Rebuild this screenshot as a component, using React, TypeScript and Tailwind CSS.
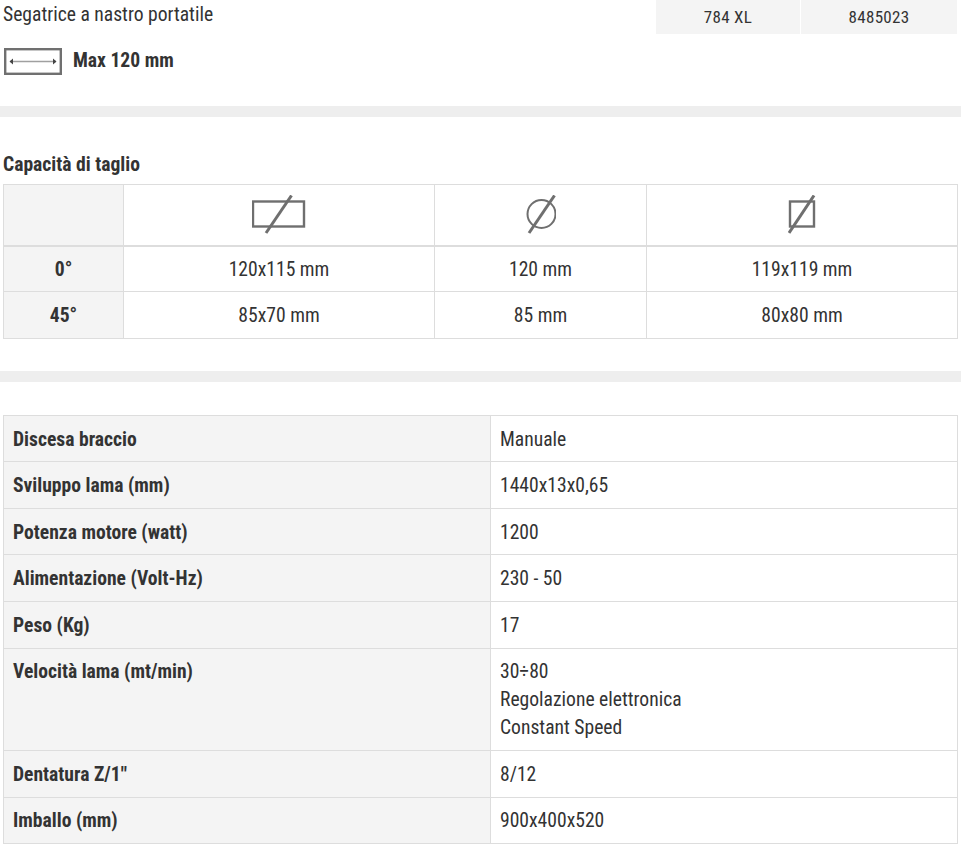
const specs: { label: string; value: string[]; h: string; pt: string }[] = [
  { label: "Discesa braccio", value: ["Manuale"], h: "h-[46px]", pt: "pt-[10px]" },
  { label: "Sviluppo lama (mm)", value: ["1440x13x0,65"], h: "h-[47px]", pt: "pt-[10px]" },
  { label: "Potenza motore (watt)", value: ["1200"], h: "h-[46px]", pt: "pt-[10px]" },
  { label: "Alimentazione (Volt-Hz)", value: ["230 - 50"], h: "h-[47px]", pt: "pt-[10px]" },
  { label: "Peso (Kg)", value: ["17"], h: "h-[47px]", pt: "pt-[10px]" },
  {
    label: "Velocità lama (mt/min)",
    value: ["30÷80", "Regolazione elettronica", "Constant Speed"],
    h: "h-[102px]",
    pt: "pt-[9px]",
  },
  { label: "Dentatura Z/1\"", value: ["8/12"], h: "h-[47px]", pt: "pt-[10px]" },
  { label: "Imballo (mm)", value: ["900x400x520"], h: "h-[46px]", pt: "pt-[9px]" },
];

const RectIcon = () => (
  <svg width="54" height="40" viewBox="0 0 54 40" fill="none" stroke="#6f6f6f">
    <rect x="1" y="6.5" width="51" height="25" strokeWidth="2.4" />
    <line x1="14" y1="38" x2="39.5" y2="0.5" strokeWidth="3" />
  </svg>
);

const RoundIcon = () => (
  <svg width="30" height="40" viewBox="0 0 30 40" fill="none" stroke="#6f6f6f">
    <circle cx="15.5" cy="19" r="14" strokeWidth="2" />
    <line x1="3" y1="38" x2="28.5" y2="0.5" strokeWidth="3" />
  </svg>
);

const SquareIcon = () => (
  <svg width="28" height="40" viewBox="0 0 28 40" fill="none" stroke="#6f6f6f">
    <rect x="2" y="6.5" width="24" height="25" strokeWidth="2.4" />
    <line x1="1" y1="38" x2="26" y2="0.5" strokeWidth="3" />
  </svg>
);

const WidthIcon = () => (
  <svg width="58" height="27" viewBox="0 0 58 27" fill="none">
    <rect x="1.2" y="1.2" width="55.6" height="24.6" stroke="#707070" strokeWidth="2.4" />
    <line x1="6" y1="13.5" x2="52" y2="13.5" stroke="#a0a0a0" strokeWidth="1.5" />
    <path d="M9 10.5 5.5 13.5l3.5 3zM49 10.5l3.5 3-3.5 3z" fill="#444" />
  </svg>
);

const Divider = () => <div className="h-[11px] bg-[#eeeeee]" />;

export default function App() {
  return (
    <div
      className="h-[849px] overflow-hidden bg-white text-[19.6px] leading-[28px] text-[#333333] [font-stretch:75%]"
      style={{ fontFamily: '"Roboto Condensed", Roboto, sans-serif' }}
    >
      {/* Header */}
      <div className="flex h-[106px] pl-[3px] pr-[4px]">
        <div className="flex-1 pt-px">
          <div>Segatrice a nastro portatile</div>
          <div className="mt-[18px] flex items-center gap-[11px] pl-px">
            <WidthIcon />
            <span className="font-bold">Max 120 mm</span>
          </div>
        </div>
        <div className="flex h-[34px] gap-px text-[17px] tracking-[0.3px]">
          <div className="flex w-[144px] items-center justify-center bg-[#f4f4f4]">784 XL</div>
          <div className="flex w-[156px] items-center justify-center bg-[#f4f4f4]">8485023</div>
        </div>
      </div>
      <Divider />

      {/* Capacita */}
      <div className="mt-[34px] pl-[3px] font-bold">Capacità di taglio</div>
      <div className="mx-[3px] mt-[5px] w-[955px] border border-[#dddddd] text-center">
        <div className="flex h-[62px] border-b-2 border-[#dddddd]">
          <div className="w-[120px] border-r border-[#dddddd] bg-[#f4f4f4]" />
          <div className="flex w-[311px] items-center justify-center border-r border-[#dddddd]">
            <RectIcon />
          </div>
          <div className="flex w-[212px] items-center justify-center border-r border-[#dddddd]">
            <RoundIcon />
          </div>
          <div className="flex flex-1 items-center justify-center">
            <SquareIcon />
          </div>
        </div>
        <div className="flex h-[45px] border-b border-[#dddddd]">
          <div className="flex w-[120px] items-center justify-center border-r border-[#dddddd] bg-[#f4f4f4] pt-[2px] font-bold">0°</div>
          <div className="flex w-[311px] items-center justify-center border-r border-[#dddddd] pt-[2px]">120x115 mm</div>
          <div className="flex w-[212px] items-center justify-center border-r border-[#dddddd] pt-[2px]">120 mm</div>
          <div className="flex flex-1 items-center justify-center pt-[2px]">119x119 mm</div>
        </div>
        <div className="flex h-[46px]">
          <div className="flex w-[120px] items-center justify-center border-r border-[#dddddd] bg-[#f4f4f4] pt-[2px] font-bold">45°</div>
          <div className="flex w-[311px] items-center justify-center border-r border-[#dddddd] pt-[2px]">85x70 mm</div>
          <div className="flex w-[212px] items-center justify-center border-r border-[#dddddd] pt-[2px]">85 mm</div>
          <div className="flex flex-1 items-center justify-center pt-[2px]">80x80 mm</div>
        </div>
      </div>

      <div className="mt-[32px]">
        <Divider />
      </div>

      {/* Dati tecnici */}
      <div className="mx-[3px] mt-[33px] w-[955px] border-t border-l border-r border-[#dddddd]">
        {specs.map((row) => (
          <div key={row.label} className={`flex border-b border-[#dddddd] ${row.h}`}>
            <div className={`w-[487px] border-r border-[#dddddd] bg-[#f4f4f4] pl-[9px] font-bold ${row.pt}`}>
              {row.label}
            </div>
            <div className={`flex-1 pl-[9px] ${row.pt}`}>
              {row.value.map((line) => (
                <div key={line}>{line}</div>
              ))}
            </div>
          </div>
        ))}
      </div>
    </div>
  );
}
